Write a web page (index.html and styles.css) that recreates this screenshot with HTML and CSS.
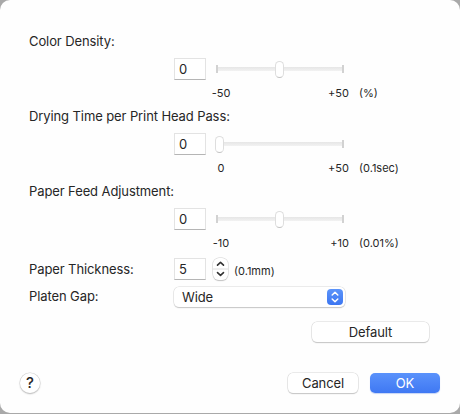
FILE: index.html
```
<!DOCTYPE html>
<html lang="en">
<head>
<meta charset="utf-8">
<title>Paper Settings</title>
<link rel="stylesheet" href="styles.css">
</head>
<body>
<main class="dialog">
  <section class="setting">
    <div class="label">Color Density:</div>
    <div class="control">
      <div class="field">0</div>
      <div class="slider middle"><div class="thumb"></div></div>
    </div>
    <div class="scale"><span class="min">-50</span><span class="max">+50</span><span class="unit">(%)</span></div>
  </section>
  <section class="setting">
    <div class="label">Drying Time per Print Head Pass:</div>
    <div class="control">
      <div class="field">0</div>
      <div class="slider start"><div class="thumb"></div></div>
    </div>
    <div class="scale"><span class="min">0</span><span class="max">+50</span><span class="unit">(0.1sec)</span></div>
  </section>
  <section class="setting">
    <div class="label">Paper Feed Adjustment:</div>
    <div class="control">
      <div class="field">0</div>
      <div class="slider middle"><div class="thumb"></div></div>
    </div>
    <div class="scale"><span class="min">-10</span><span class="max">+10</span><span class="unit">(0.01%)</span></div>
  </section>
  <section class="row thickness">
    <div class="label">Paper Thickness:</div>
    <div class="field">5</div>
    <div class="stepper">
      <svg width="15" height="22" viewBox="0 0 15 22"><path d="M0 11H15" stroke="#dedede"/><path d="M4.5 7.2 7.5 4.4l3 2.8M4.5 14.6l3 2.8 3-2.8" fill="none" stroke="#333" stroke-width="1.6" stroke-linecap="round" stroke-linejoin="round"/></svg>
    </div>
    <span class="unit">(0.1mm)</span>
  </section>
  <section class="row gap">
    <div class="label">Platen Gap:</div>
    <div class="popup"><span>Wide</span>
      <svg width="16" height="16" viewBox="0 0 16 16"><defs><linearGradient id="blue" x2="0" y2="1"><stop stop-color="#5c94fa"/><stop offset="1" stop-color="#3c76f1"/></linearGradient></defs><rect width="16" height="16" rx="4" fill="url(#blue)"/><path d="M5.2 6 8 3.3 10.8 6M5.2 10 8 12.7 10.8 10" fill="none" stroke="#fff" stroke-width="1.5" stroke-linecap="round" stroke-linejoin="round"/></svg>
    </div>
  </section>
  <div class="defaults"><div class="button default">Default</div></div>
  <footer class="footer">
    <div class="help">?</div>
    <div class="button cancel">Cancel</div>
    <div class="button ok">OK</div>
  </footer>
</main>
</body>
</html>
```
FILE: styles.css
```
* { box-sizing: border-box; }
body {
  margin: 0;
  background: #a9a9a9;
  font: 13px/16px Inter, "Liberation Sans", sans-serif;
  letter-spacing: -.1px;
  color: #262626;
}
.dialog {
  width: 460px;
  height: 413px;
  padding: 34px 20px 0 29px;
  background: #fefefe;
  border-radius: 10px;
  overflow: hidden;
}
.setting { height: 75px; }
.label { height: 16px; line-height: 14px; white-space: nowrap; }
.control { display: flex; align-items: center; height: 22px; margin: 8px 0 0 145px; }
.field {
  width: 32px;
  height: 22px;
  padding: 2px 0 0 4px;
  line-height: 16px;
  background: #fff;
  border: 1px solid #e3e3e3;
  border-bottom-color: #b5b5b5;
}
.slider {
  display: flex;
  align-items: center;
  width: 128px;
  height: 8px;
  margin-left: 10px;
  border: solid #d2d2d2;
  border-width: 0 2px;
  background: linear-gradient(#e6e6e6, #f2f2f2) center / 100% 4px no-repeat;
}
.middle { justify-content: center; }
.middle .thumb { margin-right: 1px; }
.start { border-left-color: transparent; background-clip: padding-box; }
.thumb {
  flex: none;
  width: 9px;
  height: 17px;
  background: #fff;
  border: 1px solid #dedede;
  border-bottom-color: #c4c4c4;
  border-radius: 5px;
}
.start .thumb { margin-left: -3px; }
.scale {
  display: grid;
  grid-template-columns: 40px 108px 60px;
  height: 16px;
  margin: 5px 0 0 172px;
  font-size: 11px;
  letter-spacing: 0;
}
.min { text-align: center; }
.max { text-align: right; }
.unit { font-size: 11px; letter-spacing: 0; white-space: nowrap; }
.scale .unit { padding-left: 10px; }
.row { display: flex; align-items: center; }
.row .label { width: 145px; line-height: 16px; }
.thickness { height: 22px; margin-top: -1px; }
.stepper {
  width: 15px;
  height: 22px;
  margin-left: 7px;
  border-radius: 6px;
  background: #fff;
  box-shadow: 0 0 0 .5px #d0d0d0, 0 1px 1px #bbb;
}
.stepper svg { display: block; }
.thickness .unit { margin: 3px 0 0 6px; }
.gap { height: 20px; margin-top: 7px; }
.gap .label { line-height: 14px; }
.popup {
  display: flex;
  align-items: center;
  justify-content: space-between;
  width: 171px;
  height: 20px;
  padding: 0 2px 0 8px;
  line-height: 14px;
  background: #fff;
  border-radius: 5px;
  box-shadow: 0 0 0 .5px #d8d8d8, 0 1px 1px #b8b8b8;
}
.popup span { padding-bottom: 1px; }
.defaults { display: flex; justify-content: flex-end; margin: 15px 11px 0 0; }
.button {
  display: flex;
  align-items: center;
  justify-content: center;
  height: 20px;
  padding-bottom: 1px;
  background: #fff;
  border-radius: 5px;
  box-shadow: 0 0 0 .5px #d5d5d5, 0 1px 1px #b8b8b8;
}
.default { width: 117px; }
.footer { display: flex; align-items: center; margin: 31px 0 0 -9px; }
.help {
  width: 20px;
  height: 20px;
  margin-right: auto;
  border-radius: 50%;
  background: #fff;
  box-shadow: 0 0 0 .5px #d0d0d0, 0 1px 1.5px #aaa;
  font-size: 15px;
  font-weight: 500;
  line-height: 20px;
  text-align: center;
}
.cancel { width: 70px; margin-right: 12px; }
.ok {
  width: 70px;
  color: #fff;
  background: linear-gradient(#5a92fb, #3f78f3);
  box-shadow: 0 1px 1px #c5d4f5;
}
```
